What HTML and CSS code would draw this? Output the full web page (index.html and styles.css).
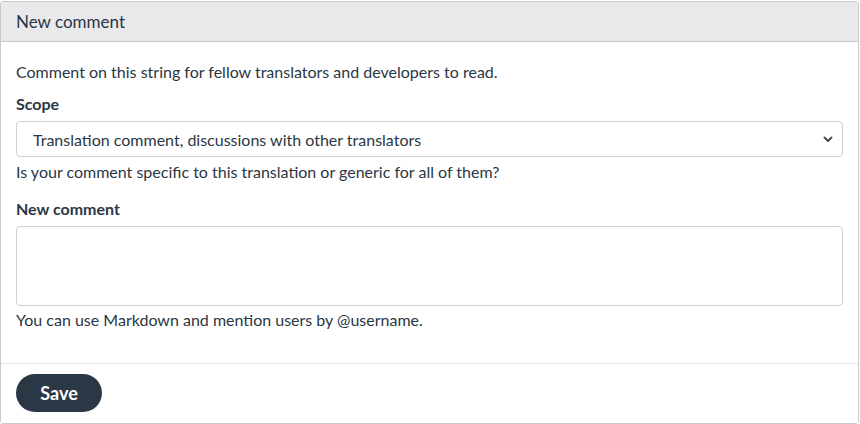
FILE: index.html
```html
<!DOCTYPE html>
<html>
<head>
<meta charset="utf-8">
<link rel="stylesheet" href="styles.css">
</head>
<body>
<div class="panel">
  <div class="panel-heading">New comment</div>
  <div class="panel-body">
    <p class="intro">Comment on this string for fellow translators and developers to read.</p>
    <label class="label">Scope</label>
    <div class="select-wrap">
      <select class="select">
        <option>Translation comment, discussions with other translators</option>
      </select>
      <svg class="chev" width="10" height="7" viewBox="0 0 10 7"><path d="M1.5 1.5 L5 5 L8.5 1.5" fill="none" stroke="#4a4f55" stroke-width="2" stroke-linecap="round" stroke-linejoin="round"/></svg>
    </div>
    <p class="help">Is your comment specific to this translation or generic for all of them?</p>
    <label class="label label2">New comment</label>
    <textarea class="textarea"></textarea>
    <p class="help help2">You can use Markdown and mention users by @username.</p>
  </div>
  <div class="panel-footer">
    <button class="btn">Save</button>
  </div>
</div>
</body>
</html>
```
FILE: styles.css
```css
* { box-sizing: border-box; }
html, body { margin: 0; padding: 0; background: #fff; }
body {
  font-family: Lato, "Noto Sans", sans-serif;
  font-size: 16px;
  color: #2a3744;
  padding: 1px 1px 0 0;
}
.panel {
  border: 1px solid #c8cacc;
  border-radius: 3px;
  height: 423px;
  display: flex;
  flex-direction: column;
}
.panel-heading {
  height: 40px;
  background: #e9e9eb;
  border-bottom: 1px solid #c8cacc;
  padding: 0 15px;
  display: flex;
  align-items: center;
  font-size: 17px;
  color: #2a3744;
}
.panel-body {
  padding: 19px 15px 0 15px;
  flex: 1;
}
.intro { margin: 0 0 10px 0; line-height: 22px; }
.label { display: block; font-weight: bold; line-height: 22px; margin-bottom: 6px; }
.label2 { margin-top: 15px; }
.select-wrap { position: relative; }
.select {
  -webkit-appearance: none;
  appearance: none;
  width: 100%;
  height: 36px;
  border: 1px solid #ced0d2;
  border-radius: 4px;
  background: #fff;
  font-family: inherit;
  font-size: 16px;
  color: #2a3744;
  padding: 0 16px;
  display: block;
}
.chev { position: absolute; right: 10px; top: 15px; }
.help { margin: 4px 0 0 0; line-height: 22px; }
.help2 { margin-top: 3px; }
.textarea {
  display: block;
  width: 100%;
  height: 80px;
  border: 1px solid #ced0d2;
  border-radius: 4px;
  resize: none;
  font-family: inherit;
}
.panel-footer {
  border-top: 1px solid #e6e6e6;
  background: #fff;
  padding: 10px 15px 11px;
}
.btn {
  height: 38px;
  width: 86px;
  border: 0;
  border-radius: 19px;
  background: #2a3744;
  color: #fff;
  font-family: inherit;
  font-weight: bold;
  font-size: 18px;
}
```
